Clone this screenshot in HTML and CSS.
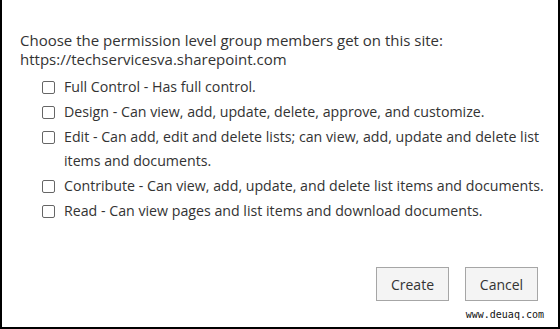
FILE: index.html
```html
<!DOCTYPE html>
<html>
<head>
<meta charset="utf-8">
<link rel="stylesheet" href="styles.css">
</head>
<body>
<div class="dialog">
  <p class="intro">Choose the permission level group members get on this site:<br>https://techservicesva.sharepoint.com</p>
  <ul class="options">
    <li><span class="box"></span><span class="label">Full Control - Has full control.</span></li>
    <li><span class="box"></span><span class="label">Design - Can view, add, update, delete, approve, and customize.</span></li>
    <li><span class="box"></span><span class="label">Edit - Can add, edit and delete lists; can view, add, update and delete list<br>items and documents.</span></li>
    <li><span class="box"></span><span class="label">Contribute - Can view, add, update, and delete list items and documents.</span></li>
    <li><span class="box"></span><span class="label">Read - Can view pages and list items and download documents.</span></li>
  </ul>
  <div class="actions">
    <button class="btn">Create</button>
    <button class="btn">Cancel</button>
  </div>
  <span class="watermark">www.deuaq.com</span>
</div>
</body>
</html>
```

FILE: styles.css
```css
html, body {
  margin: 0;
  padding: 0;
  background: #fff;
}
.dialog {
  position: relative;
  box-sizing: border-box;
  width: 560px;
  height: 329px;
  border: 2px solid #000;
  border-top: none;
  padding: 31px 2px 0 18px;
  font-family: "Open Sans", "Noto Sans", sans-serif;
  font-size: 15px;
  color: #333;
  display: flex;
  flex-direction: column;
}
.intro {
  margin: 0;
  line-height: 19px;
}
.options {
  list-style: none;
  margin: 6px 0 0 0;
  padding: 0 0 0 20px;
  display: flex;
  flex-direction: column;
  gap: 1px;
  font-size: 14.2px;
}
.options li {
  display: flex;
  align-items: flex-start;
  line-height: 24px;
}
.box {
  flex: none;
  box-sizing: border-box;
  width: 13px;
  height: 13px;
  border: 1px solid #666;
  border-radius: 2px;
  margin: 6px 9px 0 2px;
}
.label {
  max-width: 494px;
}
.actions {
  margin-top: auto;
  margin-bottom: 26px;
  margin-right: 18px;
  display: flex;
  justify-content: flex-end;
  gap: 16px;
}
.btn {
  box-sizing: border-box;
  width: 73px;
  height: 34px;
  background: #f4f4f4;
  border: 1px solid #a6a6a6;
  font-family: "Open Sans", "Noto Sans", sans-serif;
  font-size: 14px;
  color: #333;
  padding: 0;
}
.watermark {
  position: absolute;
  right: 14px;
  bottom: 6px;
  font-family: "DejaVu Sans Mono", monospace;
  font-size: 10px;
  line-height: 12px;
  color: #111;
}
```
